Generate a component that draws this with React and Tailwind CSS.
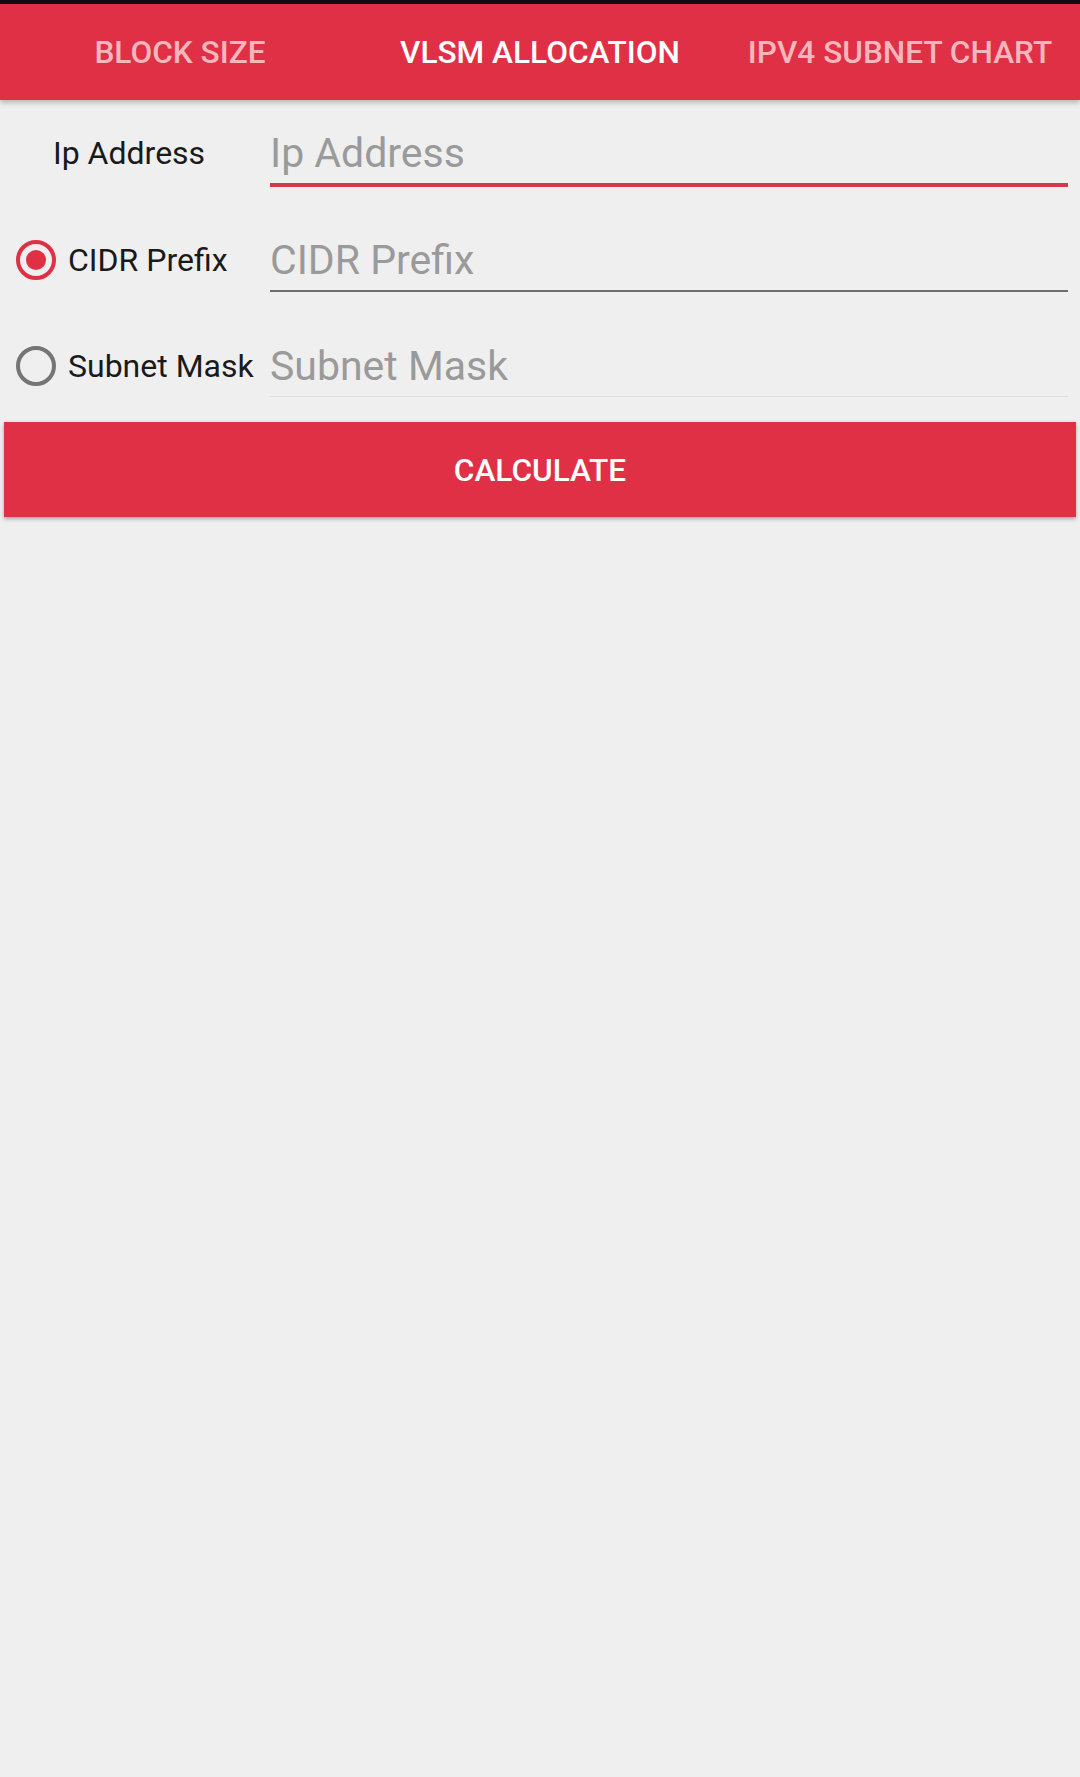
import { useState } from "react";

const tabs = [
  { label: "Block Size", active: false },
  { label: "VLSM Allocation", active: true },
  { label: "IPv4 Subnet Chart", active: false },
];

function Radio({ checked }) {
  return (
    <span
      className={`flex h-10 w-10 shrink-0 items-center justify-center rounded-full border-4 ${
        checked ? "border-[#e03045]" : "border-[#757575]"
      }`}
    >
      {checked && <span className="h-5 w-5 rounded-full bg-[#e03045]" />}
    </span>
  );
}

function Field({ placeholder, line }) {
  return (
    <div className={`flex-1 pb-[6px] ${line}`}>
      <input
        type="text"
        placeholder={placeholder}
        className="block h-[48px] w-full bg-transparent p-0 text-[41px] leading-[48px] text-[#1a1a1a] outline-none placeholder:text-[#9a9a9a]"
      />
    </div>
  );
}

export default function App() {
  const [mode, setMode] = useState("cidr");

  return (
    <div className="min-h-[1777px] bg-[#efefef] font-['Roboto','Liberation_Sans',sans-serif]">
      {/* status bar remnant */}
      <div className="h-[4px] bg-[#140a0d]" />

      {/* Tabs */}
      <div className="relative z-10 flex h-[96px] bg-[#e03045] pt-[2px] shadow-[0_3px_5px_rgba(0,0,0,0.22)]">
        {tabs.map((tab) => (
          <div
            key={tab.label}
            className={`flex w-1/3 items-center justify-center text-[31.6px] font-medium uppercase ${
              tab.active ? "text-white" : "text-[#f7b6be]"
            }`}
          >
            {tab.label}
          </div>
        ))}
      </div>

      {/* Form */}
      <div className="flex flex-col pr-[12px]">
        <div className="mt-[29px] flex items-start">
          <div className="mt-[5px] w-[270px] shrink-0 pl-[53px] text-[32px] leading-[38px] text-[#1a1a1a]">
            Ip Address
          </div>
          <Field placeholder="Ip Address" line="border-b-4 border-[#d8394a]" />
        </div>

        <div className="mt-[49px] flex items-start">
          <button
            type="button"
            onClick={() => setMode("cidr")}
            className="mt-[4px] flex w-[270px] shrink-0 items-center gap-[12px] pl-[16px] text-left text-[32px] leading-[38px] text-[#1a1a1a]"
          >
            <Radio checked={mode === "cidr"} />
            CIDR Prefix
          </button>
          <Field placeholder="CIDR Prefix" line="border-b-2 border-[#6e6e6e]" />
        </div>

        <div className="mt-[50px] flex items-start">
          <button
            type="button"
            onClick={() => setMode("mask")}
            className="mt-[4px] flex w-[270px] shrink-0 items-center gap-[12px] pl-[16px] text-left text-[32px] leading-[38px] text-[#1a1a1a] whitespace-nowrap"
          >
            <Radio checked={mode === "mask"} />
            Subnet Mask
          </button>
          <Field placeholder="Subnet Mask" line="border-b border-[#dedede]" />
        </div>
      </div>

      <div className="px-[4px] pt-[25px]">
        <button
          type="button"
          className="flex h-[95px] w-full items-center justify-center bg-[#e03045] pt-[3px] text-[31.6px] font-medium uppercase text-white shadow-[0_2px_4px_rgba(0,0,0,0.3)]"
        >
          Calculate
        </button>
      </div>
    </div>
  );
}
